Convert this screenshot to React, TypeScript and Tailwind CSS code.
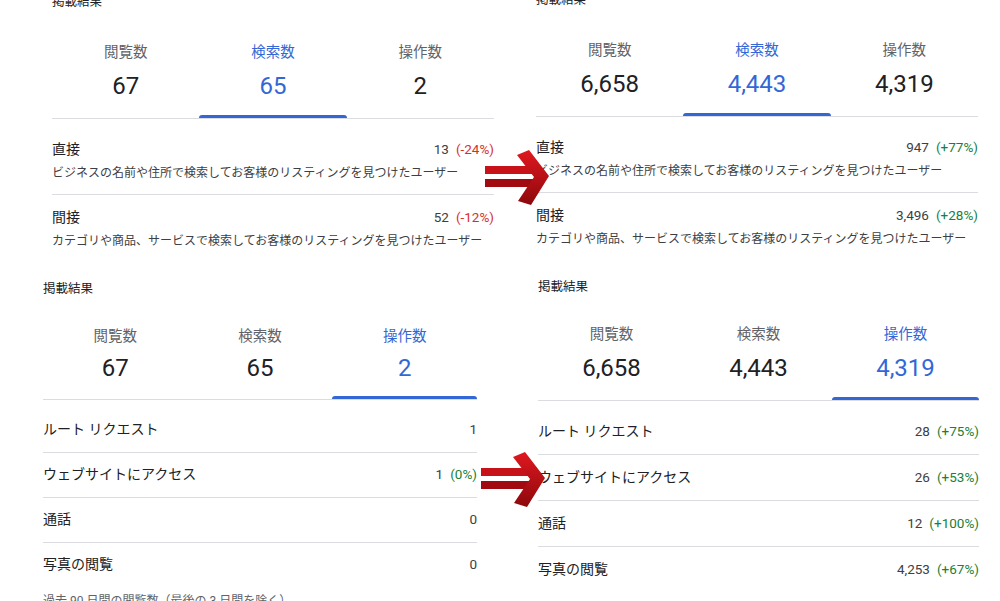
import React from "react";

type TabData = { label: string; value: string };

function Tabs({
  tabs,
  active,
  numGap,
  underGap,
  topGap,
}: {
  tabs: TabData[];
  active: number;
  numGap: string;
  underGap: string;
  topGap: string;
}) {
  return (
    <div className={`flex border-b border-[#dadce0] ${topGap}`}>
      {tabs.map((t, i) => (
        <div key={t.label} className="flex flex-1 flex-col items-center">
          <div
            className={`text-[14.5px] leading-5 ${
              i === active ? "text-[#3367d6]" : "text-[#5f6368]"
            }`}
          >
            {t.label}
          </div>
          <div
            className={`${numGap} text-[24px] leading-8 ${
              i === active ? "text-[#3367d6]" : "text-[#202124]"
            }`}
          >
            {t.value}
          </div>
          <div
            className={`${underGap} h-[3px] w-full rounded-t-[3px] ${
              i === active ? "bg-[#3367d6]" : "bg-transparent"
            }`}
          />
        </div>
      ))}
    </div>
  );
}

function Value({ n, pct }: { n: string; pct?: string }) {
  const neg = pct && pct.startsWith("(-");
  return (
    <span className="text-[13.5px] text-[#3c4043] whitespace-nowrap">
      {n}
      {pct && (
        <span className={`ml-[7px] ${neg ? "text-[#d93025]" : "text-[#188038]"}`}>{pct}</span>
      )}
    </span>
  );
}

type SearchRow = { label: string; n: string; pct: string; desc: string };

function SearchRows({ rows }: { rows: SearchRow[] }) {
  return (
    <div className="pt-[8px]">
      {rows.map((r, i) => (
        <div
          key={r.label}
          className={`pt-3 pb-[11px] ${i < rows.length - 1 ? "border-b border-[#dadce0]" : ""}`}
        >
          <div className="flex items-center justify-between leading-5">
            <span className="text-[14px] text-[#202124]">{r.label}</span>
            <Value n={r.n} pct={r.pct} />
          </div>
          <div className="mt-1 text-[12px] leading-5 text-[#3c4043] whitespace-nowrap">{r.desc}</div>
        </div>
      ))}
    </div>
  );
}

type ActRow = { label: string; n: string; pct?: string };

function ActionRows({ rows, rowPad }: { rows: ActRow[]; rowPad: string }) {
  return (
    <div className="pt-[8px]">
      {rows.map((r, i) => (
        <div
          key={r.label}
          className={`${rowPad} pb-[13px] flex items-center justify-between leading-5 ${
            i < rows.length - 1 ? "border-b border-[#dadce0]" : ""
          }`}
        >
          <span className="text-[14px] text-[#202124]">{r.label}</span>
          <Value n={r.n} pct={r.pct} />
        </div>
      ))}
    </div>
  );
}

function Arrow({ className, id }: { className: string; id: string }) {
  return (
    <svg className={className} width="66" height="56" viewBox="0 0 66 56">
      <defs>
        <linearGradient id={id} x1="0" y1="0" x2="0" y2="1">
          <stop offset="0" stopColor="#e01820" />
          <stop offset="1" stopColor="#8c080c" />
        </linearGradient>
      </defs>
      <rect x="1" y="16" width="50" height="8" fill="#c8121a" />
      <rect x="1" y="29" width="50" height="8" fill="#a00a10" />
      <polygon points="33,5 45,0 65,26 47,55 34,51 50,27" fill={`url(#${id})`} />
    </svg>
  );
}

const searchTabsA: TabData[] = [
  { label: "閲覧数", value: "67" },
  { label: "検索数", value: "65" },
  { label: "操作数", value: "2" },
];
const searchTabsB: TabData[] = [
  { label: "閲覧数", value: "6,658" },
  { label: "検索数", value: "4,443" },
  { label: "操作数", value: "4,319" },
];

const desc1 = "ビジネスの名前や住所で検索してお客様のリスティングを見つけたユーザー";
const desc2 = "カテゴリや商品、サービスで検索してお客様のリスティングを見つけたユーザー";

export default function App() {
  return (
    <div className="relative h-[601px] w-[1000px] overflow-hidden bg-white font-['Roboto','Noto_Sans_CJK_JP',sans-serif]">
      <div className="flex h-[270px] overflow-hidden">
        <div className="w-[500px] pl-[52px]">
          <div className="w-[442px]">
            <div className="mt-[-8px] text-[12.5px] leading-5 text-[#202124]">掲載結果</div>
            <Tabs tabs={searchTabsA} active={1} topGap="mt-[31px]" numGap="mt-[7px]" underGap="mt-[13px]" />
            <SearchRows
              rows={[
                { label: "直接", n: "13", pct: "(-24%)", desc: desc1 },
                { label: "間接", n: "52", pct: "(-12%)", desc: desc2 },
              ]}
            />
          </div>
        </div>
        <div className="w-[500px] pl-[36px]">
          <div className="w-[442px]">
            <div className="mt-[-10px] text-[12.5px] leading-5 text-[#202124]">掲載結果</div>
            <Tabs tabs={searchTabsB} active={1} topGap="mt-[31px]" numGap="mt-[7px]" underGap="mt-[13px]" />
            <SearchRows
              rows={[
                { label: "直接", n: "947", pct: "(+77%)", desc: desc1 },
                { label: "間接", n: "3,496", pct: "(+28%)", desc: desc2 },
              ]}
            />
          </div>
        </div>
      </div>
      <div className="flex h-[331px] overflow-hidden">
        <div className="w-[500px] pl-[43px]">
          <div className="w-[434px]">
            <div className="mt-[9px] text-[12.5px] leading-5 text-[#202124]">掲載結果</div>
            <Tabs tabs={searchTabsA} active={2} topGap="mt-[28px]" numGap="mt-[5px]" underGap="mt-[12px]" />
            <ActionRows
              rowPad="pt-[11px]"
              rows={[
                { label: "ルート リクエスト", n: "1" },
                { label: "ウェブサイトにアクセス", n: "1", pct: "(0%)" },
                { label: "通話", n: "0" },
                { label: "写真の閲覧", n: "0" },
              ]}
            />
            <div className="mt-[5px] text-[12px] leading-[18px] text-[#5f6368]">
              過去 90 日間の閲覧数（最後の 3 日間を除く）
            </div>
          </div>
        </div>
        <div className="w-[500px] pl-[38px]">
          <div className="w-[441px]">
            <div className="mt-[7px] text-[12.5px] leading-5 text-[#202124]">掲載結果</div>
            <Tabs tabs={searchTabsB} active={2} topGap="mt-[28px]" numGap="mt-[7px]" underGap="mt-[13px]" />
            <ActionRows
              rowPad="pt-[12px]"
              rows={[
                { label: "ルート リクエスト", n: "28", pct: "(+75%)" },
                { label: "ウェブサイトにアクセス", n: "26", pct: "(+53%)" },
                { label: "通話", n: "12", pct: "(+100%)" },
                { label: "写真の閲覧", n: "4,253", pct: "(+67%)" },
              ]}
            />
          </div>
        </div>
      </div>
      <Arrow id="ga1" className="absolute left-[484px] top-[150px]" />
      <Arrow id="ga2" className="absolute left-[480px] top-[452px]" />
    </div>
  );
}
